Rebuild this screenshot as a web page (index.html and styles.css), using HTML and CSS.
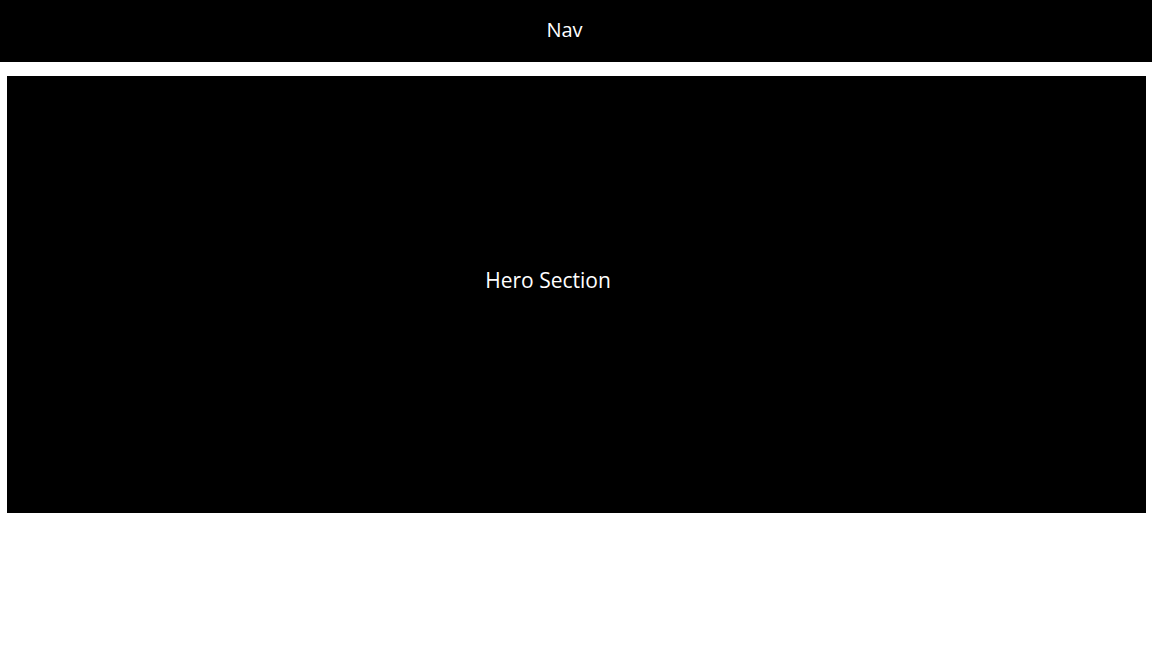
FILE: index.html
```html
<!DOCTYPE html>
<html lang="en">
<head>
<meta charset="utf-8">
<title>Layout</title>
<link rel="stylesheet" href="styles.css">
</head>
<body>
<nav class="nav"><span class="nav-label">Nav</span></nav>
<section class="hero"><span class="hero-label">Hero Section</span></section>
</body>
</html>
```

FILE: styles.css
```css
html, body {
  margin: 0;
  padding: 0;
  background: #ffffff;
}
body {
  font-family: "Open Sans", "Noto Sans", sans-serif;
  color: #ffffff;
}
.nav {
  height: 62px;
  background: #000000;
  display: flex;
  align-items: center;
  justify-content: center;
  padding-right: 23px;
  padding-bottom: 3px;
  box-sizing: border-box;
  font-size: 20px;
}
.hero {
  margin: 14px 6px 0 7px;
  height: 437px;
  background: #000000;
  display: flex;
  align-items: center;
  justify-content: center;
  padding-right: 57px;
  padding-bottom: 30px;
  box-sizing: border-box;
  font-size: 21px;
}
```
